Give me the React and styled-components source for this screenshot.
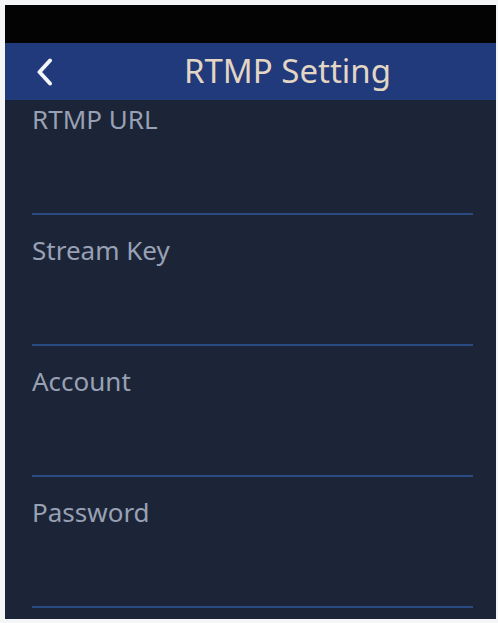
import React from "react";
import styled, { createGlobalStyle } from "styled-components";

const Global = createGlobalStyle`
  html, body { margin: 0; padding: 0; background: #f4f5f6; }
  body { font-family: "Noto Sans", "Open Sans", sans-serif; }
`;

const Frame = styled.div`
  padding: 5px 2px 4px 5px;
  height: 623px;
  box-sizing: border-box;
  display: flex;
  flex-direction: column;
`;

const Screen = styled.div`
  flex: 1;
  display: flex;
  flex-direction: column;
  background: #1c2437;
  overflow: hidden;
`;

const StatusBar = styled.div`
  height: 38px;
  background: #030303;
  flex-shrink: 0;
`;

const Header = styled.header`
  position: relative;
  height: 57px;
  flex-shrink: 0;
  background: #203a7c;
  display: flex;
  align-items: center;
  justify-content: center;
  padding-left: 74px;
`;

const BackButton = styled.button`
  position: absolute;
  left: 25px;
  top: 50%;
  transform: translateY(-50%);
  width: 30px;
  height: 36px;
  padding: 0;
  border: 0;
  background: transparent;
  display: flex;
  align-items: center;
  justify-content: center;
`;

const Title = styled.h1`
  margin: 0;
  font-size: 33px;
  font-weight: 400;
  color: #e3d6c4;
  line-height: 1;
  margin-top: -2px;
`;

const List = styled.div`
  display: flex;
  flex-direction: column;
  padding: 0 23px 0 27px;
`;

const Field = styled.div`
  height: ${(p) => p.$height}px;
  box-sizing: border-box;
  padding-top: ${(p) => p.$top}px;
  border-bottom: 2px solid #2b4c82;
`;

const Label = styled.div`
  font-size: 26px;
  line-height: 30px;
  color: #98a1b4;
`;

const fields = [
  { label: "RTMP URL", height: 115, top: 4 },
  { label: "Stream Key", height: 131, top: 20 },
  { label: "Account", height: 131, top: 20 },
  { label: "Password", height: 131, top: 20 },
];

export default function App() {
  return (
    <>
      <Global />
      <Frame>
        <Screen>
          <StatusBar />
          <Header>
            <BackButton aria-label="Back">
              <svg width="20" height="28" viewBox="0 0 20 28">
                <path
                  d="M15 2.5 L4.5 14 L15 25.5"
                  fill="none"
                  stroke="#f2f4f8"
                  strokeWidth="4"
                  strokeLinecap="round"
                  strokeLinejoin="round"
                />
              </svg>
            </BackButton>
            <Title>RTMP Setting</Title>
          </Header>
          <List>
            {fields.map((f) => (
              <Field key={f.label} $height={f.height} $top={f.top}>
                <Label>{f.label}</Label>
              </Field>
            ))}
          </List>
        </Screen>
      </Frame>
    </>
  );
}
